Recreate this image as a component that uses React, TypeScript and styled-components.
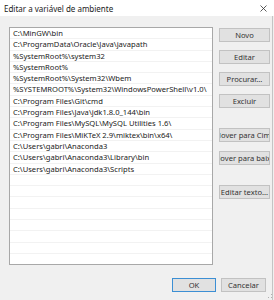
import React from "react";
import styled, { createGlobalStyle } from "styled-components";

const Global = createGlobalStyle`
  html, body { margin: 0; padding: 0; background: #f0f0f0; }
  body { font-family: "Noto Sans", "Open Sans", "Liberation Sans", sans-serif; color: #1a1a1a; }
`;

const Window = styled.div`
  width: 274px;
  height: 300px;
  display: flex;
  flex-direction: column;
  background: #f0f0f0;
  overflow: hidden;
  position: relative;
`;

const TitleBar = styled.div`
  height: 16px;
  background: #fff;
  display: flex;
  align-items: center;
  justify-content: space-between;
  padding: 0 7px 0 4px;
  font-size: 8px;
  color: #222;
  flex-shrink: 0;
`;

const Content = styled.div`
  flex: 1;
  display: flex;
  flex-direction: column;
  width: 272px;
  border-right: 1px solid #c4c4c4;
`;

const Main = styled.div`
  display: flex;
  padding: 11px 0 0 9px;
`;

const ListBox = styled.div`
  width: 202px;
  height: 236px;
  background: #fff;
  border: 1px solid #a8a8a8;
  padding-top: 0px;
  overflow: hidden;
`;

const Row = styled.div`
  height: 11.3px;
  line-height: 11.3px;
  padding-left: 3px;
  font-size: 7.6px;
  white-space: nowrap;
  color: #222;
  box-shadow: inset 0 -1px 0 #f2f2f2;
`;

const ButtonColumn = styled.div`
  display: flex;
  flex-direction: column;
  margin-left: 6px;
  width: 51px;
  padding-top: 1px;
`;

const Btn = styled.div<{ $gap?: number; $w?: number; $focus?: boolean }>`
  height: 14px;
  width: ${(p) => p.$w ?? 51}px;
  margin-top: ${(p) => p.$gap ?? 0}px;
  box-sizing: border-box;
  background: #e1e1e1;
  border: 1px solid ${(p) => (p.$focus ? "#3c8fd4" : "#c2c2c2")};
  display: flex;
  align-items: center;
  justify-content: center;
  overflow: hidden;
  white-space: nowrap;
  font-size: 7.6px;
  color: #333;
`;

const Footer = styled.div`
  display: flex;
  justify-content: flex-end;
  gap: 5px;
  padding: 13px 6px 0 0;
`;

const Grip = styled.svg`
  position: absolute;
  right: 1px;
  bottom: 1px;
`;

const paths = [
  "C:\\MinGW\\bin",
  "C:\\ProgramData\\Oracle\\Java\\javapath",
  "%SystemRoot%\\system32",
  "%SystemRoot%",
  "%SystemRoot%\\System32\\Wbem",
  "%SYSTEMROOT%\\System32\\WindowsPowerShell\\v1.0\\",
  "C:\\Program Files\\Git\\cmd",
  "C:\\Program Files\\Java\\jdk1.8.0_144\\bin",
  "C:\\Program Files\\MySQL\\MySQL Utilities 1.6\\",
  "C:\\Program Files\\MiKTeX 2.9\\miktex\\bin\\x64\\",
  "C:\\Users\\gabri\\Anaconda3",
  "C:\\Users\\gabri\\Anaconda3\\Library\\bin",
  "C:\\Users\\gabri\\Anaconda3\\Scripts",
];

export default function App() {
  const rows = [...paths, ...Array(8).fill("")];
  return (
    <Window>
      <Global />
      <TitleBar>
        <span>Editar a variável de ambiente</span>
        <svg width="7" height="7" viewBox="0 0 7 7">
          <path d="M0.5 0.5L6.5 6.5M6.5 0.5L0.5 6.5" stroke="#333" strokeWidth="0.8" />
        </svg>
      </TitleBar>
      <Content>
        <Main>
          <ListBox>
            {rows.map((r, i) => (
              <Row key={i}>{r || "\u00a0"}</Row>
            ))}
          </ListBox>
          <ButtonColumn>
            <Btn>Novo</Btn>
            <Btn $gap={8}>Editar</Btn>
            <Btn $gap={8}>Procurar...</Btn>
            <Btn $gap={8}>Excluir</Btn>
            <Btn $gap={20}>Mover para Cima</Btn>
            <Btn $gap={9}>Mover para baixo</Btn>
            <Btn $gap={20}>Editar texto...</Btn>
          </ButtonColumn>
        </Main>
        <Footer>
          <Btn $w={44} $focus>OK</Btn>
          <Btn $w={45}>Cancelar</Btn>
        </Footer>
      </Content>
      <Grip width="5" height="5" viewBox="0 0 5 5">
        <rect x="3" y="0" width="1" height="1" fill="#b0b0b0" />
        <rect x="0" y="3" width="1" height="1" fill="#b0b0b0" />
        <rect x="3" y="3" width="1" height="1" fill="#b0b0b0" />
      </Grip>
    </Window>
  );
}
